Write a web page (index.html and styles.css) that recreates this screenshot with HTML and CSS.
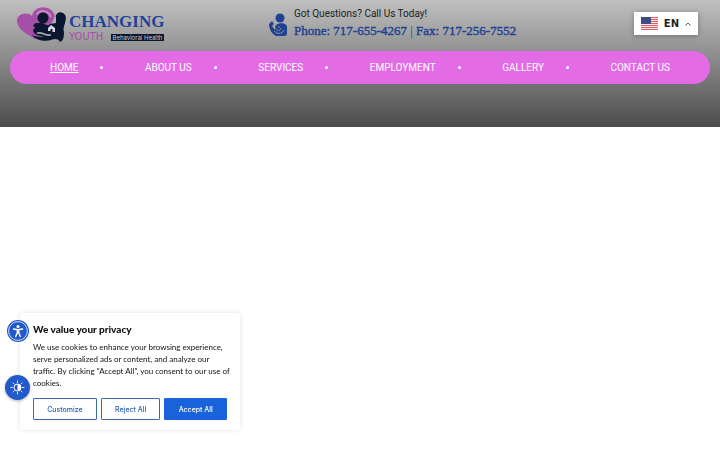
FILE: index.html
```html
<!DOCTYPE html>
<html lang="en">
<head>
    <meta charset="UTF-8">
    <meta name="viewport" content="width=device-width, initial-scale=1.0">
    <title>Changing Youth Behavioral Health</title>
    <link rel="stylesheet" href="styles.css">
</head>
<body>
    <header>
        <div class="top-bar">
            <a class="logo" href="#" aria-label="Changing Youth Behavioral Health">
                <svg class="logo-mark" viewBox="0 0 50 37" aria-hidden="true">
                    <path d="M18 32C10 27 0 22 0 14C0 7 9 4 15 9C17-2 34-3 38 9L30 26Z" fill="#a64fa8"/>
                    <path d="M20 8C22 3 31 2 34 10" fill="none" stroke="#c48bc3" stroke-width="2"/>
                    <circle cx="26" cy="11" r="5.500" fill="#0b1730"/>
                    <path d="M39 11C38 7 42 4 46 6C50 8 49 13 48 16C47 20 46 21 47 25C47 31 46 34 43 35C42 32 38 31 34 33C28 35 18 33 15 28C19 30 24 30 27 29C21 29 16 27 16 23C18 21 19 20 16 19C17 15 21 16 25 16C29 17 31 20 33 17L39 16Z" fill="#0b1730"/>
                    <path d="M31 24V21L34 18L38 21V25H35.500V22H33.500V24Z" fill="#d8d8df"/>
                    <path d="M20 26C27 25 27 29 34 28" fill="none" stroke="#a9a9ad" stroke-width="1.500"/>
                </svg>
                <span class="logo-text">
                    <span class="logo-name">CHANGING</span>
                    <span class="logo-sub">
                        <span class="logo-youth">YOUTH</span>
                        <span class="logo-tag">Behavioral Health</span>
                    </span>
                </span>
            </a>

            <div class="contact">
                <svg class="contact-icon" viewBox="0 0 19 23" aria-hidden="true">
                    <circle cx="11" cy="5" r="4.500" fill="#1c4290"/>
                    <path d="M6 14C7 9 18 9 18 14V20C18 22 17 23 15 23H7C3 21 0 16 0 11L3 8L5 11L3 13L6 17Z" fill="#1c4290"/>
                    <path d="M5 13C7 16 9 19 11 17C13 15 9 14 9 13M5 18L8 20C11 21 14 20 15 17" fill="none" stroke="#a5a5a5" stroke-width=".8"/>
                </svg>
                <div class="contact-text">
                    <p>Got Questions? Call Us Today!</p>
                    <h2>Phone: 717-655-4267 <span>|</span> Fax: 717-256-7552</h2>
                </div>
            </div>

            <button class="language" type="button">
                <svg class="flag" viewBox="0 0 17 13" shape-rendering="crispEdges" aria-hidden="true">
                    <rect width="17" height="13" fill="#f6e6e6"/>
                    <path d="M0 0H17V1H0ZM0 2H17V3H0ZM0 4H17V5H0ZM0 6H17V7H0ZM0 8H17V9H0ZM0 10H17V11H0ZM0 12H17V13H0Z" fill="#e0606c"/>
                    <rect width="10" height="7" fill="#3f4d87"/>
                </svg>
                <span>EN</span>
                <svg class="chevron" viewBox="0 0 6 4" aria-hidden="true">
                    <path d="M.5 3.500L3 1L5.500 3.500" fill="none" stroke="#444" stroke-width=".9"/>
                </svg>
            </button>
        </div>

        <nav>
            <ul class="nav-bar">
                <li><a class="active" href="#">HOME</a></li>
                <li><a href="#">ABOUT US</a></li>
                <li><a href="#">SERVICES</a></li>
                <li><a href="#">EMPLOYMENT</a></li>
                <li><a href="#">GALLERY</a></li>
                <li><a href="#">CONTACT US</a></li>
            </ul>
        </nav>
    </header>

    <section class="cookie-box" aria-labelledby="cookie-title">
        <h3 id="cookie-title">We value your privacy</h3>
        <p>We use cookies to enhance your browsing experience, serve personalized ads or content, and analyze our traffic. By clicking "Accept All", you consent to our use of cookies.</p>
        <div class="cookie-buttons">
            <button type="button">Customize</button>
            <button type="button">Reject All</button>
            <button type="button" class="accept">Accept All</button>
        </div>
    </section>

    <button class="round-button accessibility" type="button" aria-label="Accessibility">
        <svg viewBox="0 0 22 22" aria-hidden="true">
            <circle cx="11" cy="11" r="9.400" fill="none" stroke="#fff" stroke-width=".8"/>
            <circle cx="11" cy="6.500" r="1.500" fill="#fff"/>
            <path d="M6.500 9L11 9.800L15.500 9M11 9.800V12.500M10.300 10V12.500L8.700 16.500M11.700 10V12.500L13.300 16.500" fill="none" stroke="#fff" stroke-width="1.400" stroke-linecap="round"/>
        </svg>
    </button>
    <button class="round-button contrast" type="button" aria-label="Contrast">
        <svg viewBox="0 0 25 25" aria-hidden="true">
            <circle cx="12.500" cy="12.500" r="3.500" fill="none" stroke="#fff" stroke-width="1"/>
            <path d="M12.500 9A3.500 3.500 0 0 1 12.500 16Z" fill="#fff"/>
            <path d="M12.500 6V7.500M12.500 17.500V19M6 12.500H7.500M17.500 12.500H19M8 8L9 9M16 16L17 17M8 17L9 16M16 9L17 8" stroke="#fff" stroke-width=".9" stroke-linecap="round"/>
        </svg>
    </button>
</body>
</html>
```
FILE: styles.css
```css
body {
    margin: 0;
    padding: 0;
    font-family: Lato, "Open Sans", sans-serif;
    background: #fff;
}
header {
    padding: 0 10px 43px;
    background: linear-gradient(#c0c0c0, #4c4c4c);
}
.top-bar {
    display: grid;
    grid-template-columns: 37% 1fr auto;
    align-items: start;
    padding: 7px 12px 7px 7px;
}
.logo {
    display: flex;
    height: 37px;
    text-decoration: none;
}
.logo-mark {
    width: 50px;
    height: 37px;
}
.logo-text {
    display: flex;
    flex-direction: column;
    padding: 5px 0 0 2px;
}
.logo-name {
    font-family: "Liberation Serif", serif;
    font-weight: bold;
    font-size: 17px;
    line-height: 19px;
    color: #1f439b;
}
.logo-sub {
    display: flex;
    align-items: center;
    justify-content: space-between;
}
.logo-youth {
    font-family: "DejaVu Sans", sans-serif;
    font-size: 10px;
    line-height: 12px;
    color: #a64fa8;
}
.logo-tag {
    padding: 0 2px;
    background: #0b1730;
    color: #ccc;
    font-family: Inter, sans-serif;
    font-size: 6px;
    line-height: 7px;
    white-space: nowrap;
}
.contact {
    display: flex;
    align-items: center;
    gap: 6px;
    color: #1c4290;
}
.contact-icon {
    width: 19px;
    height: 23px;
}
.contact-text p {
    margin: 0;
    font-family: Roboto, sans-serif;
    font-size: 10px;
    line-height: 14px;
    color: #222;
}
.contact-text h2 {
    margin: 0;
    font-family: "Liberation Serif", serif;
    font-size: 13px;
    font-weight: normal;
    line-height: 20px;
    white-space: nowrap;
    -webkit-text-stroke: 0.4px #1c4290;
}
.contact-text h2 span {
    -webkit-text-stroke: 0;
}
.language {
    display: flex;
    align-items: center;
    gap: 6px;
    margin-top: 5px;
    padding: 0 7px;
    height: 23px;
    border: none;
    background: #fff;
    box-shadow: 0 1px 5px rgba(0, 0, 0, 0.3);
    font-family: "DejaVu Sans", sans-serif;
    font-weight: bold;
    font-size: 10px;
    color: #222;
    cursor: pointer;
}
.flag {
    width: 17px;
    height: 13px;
}
.chevron {
    width: 6px;
    height: 4px;
}
.nav-bar {
    list-style: none;
    display: flex;
    justify-content: space-between;
    margin: 0;
    padding: 0 40px;
    background: #e36ce6;
    border-radius: 17px;
}
.nav-bar li {
    display: flex;
    align-items: center;
    height: 33px;
}
.nav-bar li:not(:last-child)::after {
    content: "";
    width: 3px;
    height: 3px;
    margin-left: 22px;
    border-radius: 50%;
    background: #fff;
}
.nav-bar a {
    font-family: Roboto, sans-serif;
    font-size: 10px;
    color: #fff;
    text-decoration: none;
    white-space: nowrap;
}
.nav-bar a.active {
    text-decoration: underline;
}
.cookie-box {
    position: fixed;
    left: 20px;
    bottom: 20px;
    box-sizing: border-box;
    width: 220px;
    padding: 9px 13px 10px;
    background: #fff;
    border-radius: 3px;
    box-shadow: 0 0 5px rgba(0, 0, 0, 0.12);
}
.cookie-box h3 {
    margin: 0 0 5px;
    font-size: 10px;
    line-height: 14px;
    font-weight: 900;
    color: #111;
}
.cookie-box p {
    margin: 0 -4px 9px 0;
    font-size: 8px;
    line-height: 12px;
    color: #111;
}
.cookie-buttons {
    display: flex;
    gap: 4px;
}
.cookie-buttons button {
    flex: 1 1 auto;
    height: 22px;
    padding: 0 8px;
    border: 1px solid #3a6cae;
    border-radius: 1px;
    background: #fff;
    color: #265fb5;
    font-family: Inter, sans-serif;
    font-size: 7px;
    font-weight: 500;
    cursor: pointer;
}
.cookie-buttons .accept {
    border-color: #1863dc;
    background: #1863dc;
    color: #fff;
}
.round-button {
    position: fixed;
    padding: 0;
    border: none;
    border-radius: 50%;
    background: #2259cb;
    cursor: pointer;
}
.round-button svg {
    display: block;
    width: 100%;
    height: 100%;
}
.accessibility {
    left: 7px;
    bottom: 108px;
    width: 22px;
    height: 22px;
}
.contrast {
    left: 5px;
    bottom: 50px;
    width: 25px;
    height: 25px;
    box-shadow: 0 1px 3px rgba(0, 0, 0, 0.3);
}
```
